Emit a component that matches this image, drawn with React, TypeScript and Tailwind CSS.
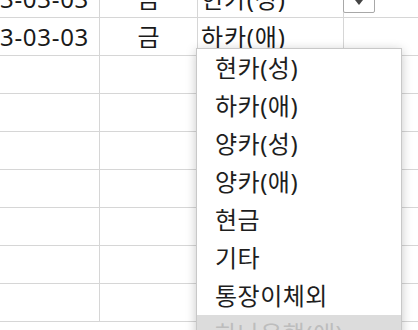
import React from "react";

const rows: [string, string, string][] = [
  ["2023-03-03", "금", "현카(성)"],
  ["2023-03-03", "금", "하카(애)"],
  ["", "", ""],
  ["", "", ""],
  ["", "", ""],
  ["", "", ""],
  ["", "", ""],
  ["", "", ""],
  ["", "", ""],
];

const items = ["현카(성)", "하카(애)", "양카(성)", "양카(애)", "현금", "기타", "통장이체외", "하나은행(애)"];

export default function App() {
  return (
    <div
      className="relative w-[418px] h-[330px] overflow-hidden bg-white text-[#1a1a1a]"
      style={{ fontFamily: '"Noto Sans", "Noto Sans CJK KR", sans-serif' }}
    >
      <div className="-mt-[20px] flex flex-col">
        {rows.map((r, i) => (
          <div key={i} className="flex h-[38px] border-b border-[#d6d6d6]">
            <div className="w-[100px] shrink-0 border-r border-[#d6d6d6] flex items-center justify-end pr-[10px] overflow-hidden whitespace-nowrap text-[24px] tracking-[0.7px] leading-none">
              {r[0]}
            </div>
            <div className="w-[98px] shrink-0 border-r border-[#d6d6d6] flex items-center justify-center text-[24px] leading-none">
              {r[1]}
            </div>
            <div className="w-[146px] shrink-0 border-r border-[#d6d6d6] flex items-center pl-[3px] text-[24px] tracking-[0.8px] leading-none whitespace-nowrap">
              {r[2]}
            </div>
            <div className="flex-1" />
          </div>
        ))}
      </div>

      <div className="absolute left-[343px] -top-[4px] w-[32px] h-[17px] bg-white border border-[#a8a8a8] rounded-b-[2px] flex justify-center">
        <svg width="8" height="6" viewBox="0 0 8 6" className="mt-[3px]">
          <path d="M0 0 L8 0 L4 5 Z" fill="#444" />
        </svg>
      </div>

      <div className="absolute left-[196px] top-[48px] w-[206px] h-[330px] bg-white border border-[#c8c8c8] shadow-[0_2px_10px_rgba(0,0,0,0.22)] flex flex-col">
        {items.map((t, i) => (
          <div
            key={t}
            className={
              "h-[38px] shrink-0 flex items-center pl-[18px] text-[24px] tracking-[0.5px] leading-none whitespace-nowrap " +
              (i === 7 ? "bg-[#dcdcdc] text-[#bdbdbd]" : "text-[#1e1e1e]")
            }
          >
            {t}
          </div>
        ))}
      </div>
    </div>
  );
}
